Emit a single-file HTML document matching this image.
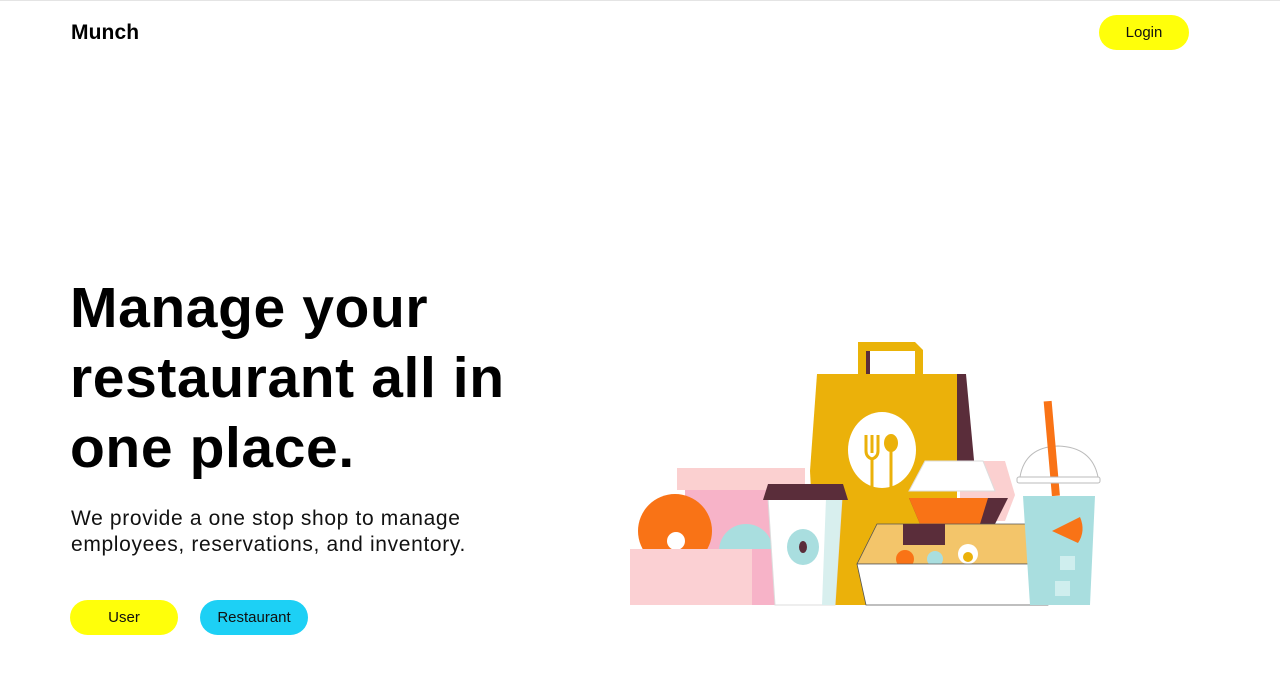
<!DOCTYPE html>
<html><head><meta charset="utf-8"><style>
*{margin:0;padding:0;box-sizing:border-box}
body{width:1280px;height:688px;background:#fff;font-family:"Liberation Sans",sans-serif;color:#000;position:relative;overflow:hidden;border-top:1px solid #e4e4e4}
.logo{position:absolute;left:71px;top:20px;font-size:21px;font-weight:bold;letter-spacing:0.1px}
.btn{position:absolute;border-radius:18px;font-size:15px;display:flex;align-items:center;justify-content:center;color:#111}
h1{position:absolute;left:70px;top:272px;font-size:57px;line-height:70px;font-weight:bold;letter-spacing:0.6px;width:520px}
p{position:absolute;left:71px;top:505px;font-size:21px;line-height:26px;color:#111;letter-spacing:0.65px;white-space:nowrap}
svg{position:absolute;left:0;top:0}
</style></head><body>
<div class="logo">Munch</div>
<div class="btn" style="left:1099px;top:14px;width:90px;height:35px;background:#ffff0a">Login</div>
<h1>Manage your restaurant all in one place.</h1>
<p>We provide a one stop shop to manage<br>employees, reservations, and inventory.</p>
<div class="btn" style="left:70px;top:599px;width:108px;height:35px;background:#ffff0a">User</div>
<div class="btn" style="left:200px;top:599px;width:108px;height:35px;background:#1dd0f5">Restaurant</div>
<svg width="1280" height="688">
<path d="M858 373 V341 H915 L923 349 V373 H915 V350 H866 V373Z" fill="#eab308"/>
<rect x="866" y="350" width="4" height="23" fill="#5a2d3a"/>
<polygon points="953,373 966,373 975,470 955,470" fill="#5a2d3a"/>
<rect x="817" y="373" width="140" height="231" fill="#ebb10a"/>
<polygon points="817,373 810,470 817,604" fill="#ebb10a"/>
<ellipse cx="882" cy="449" rx="34" ry="38" fill="#fff"/>
<g stroke="#ebb10a" stroke-width="3" fill="none"><path d="M866 434 V450 Q866 456 872 458 V488 M872 434 V452 M878 434 V450 Q878 456 872 458"/><path d="M891 450 V488"/></g>
<ellipse cx="891" cy="442" rx="7" ry="9" fill="#ebb10a"/>
<rect x="677" y="467" width="128" height="22" fill="#fbd0d0"/>
<rect x="685" y="489" width="120" height="62" fill="#f7b3c8"/>
<circle cx="675" cy="530" r="37" fill="#f97316"/>
<circle cx="676" cy="540" r="9" fill="#fff"/>
<circle cx="746" cy="550" r="27" fill="#a9dedf"/>
<rect x="630" y="548" width="130" height="56" fill="#fbd0d3"/>
<rect x="752" y="548" width="26" height="56" fill="#f7b3c8"/>
<polygon points="768,497 842,497 835,604 775,604" fill="#fff" stroke="#ddd"/>
<polygon points="826,497 842,497 835,604 822,604" fill="#d8efee"/>
<path d="M768 483 H843 L848 499 H763Z" fill="#5a2d3a"/>
<ellipse cx="803" cy="546" rx="16" ry="18" fill="#a9dedf"/>
<ellipse cx="803" cy="546" rx="4" ry="6" fill="#5a2d3a"/>
<path d="M960 460 H1005 L1015 494 L1005 520 H960Z" fill="#fbd0d0"/>
<path d="M925 460 H983 L995 490 H909Z" fill="#fff" stroke="#ddd"/>
<path d="M909 497 H1008 L995 523 H920Z" fill="#5a2d3a"/>
<path d="M909 497 H988 L980 523 H920Z" fill="#f97316"/>
<path d="M877 523 H1040 L1057 563 H857Z" fill="#f3c56a" stroke="#555" stroke-width="0.8"/>
<rect x="903" y="523" width="42" height="21" fill="#5a2d3a"/>
<circle cx="905" cy="558" r="9" fill="#f97316"/><circle cx="935" cy="558" r="8" fill="#a9dedf"/>
<circle cx="968" cy="553" r="10" fill="#fff"/><circle cx="968" cy="556" r="5" fill="#ebb10a"/>
<circle cx="1038" cy="555" r="9" fill="#fff"/><circle cx="1038" cy="558" r="4" fill="#ebb10a"/>
<path d="M857 563 H1057 L1048 604 H866Z" fill="#fff" stroke="#555" stroke-width="0.8"/>
<path d="M1020 476 Q1025 446 1058 445 Q1092 446 1098 476Z" fill="#fff" stroke="#bbb"/>
<rect x="1048" y="400" width="8" height="95" fill="#f97316" transform="rotate(-5 1052 450)"/>
<rect x="1017" y="476" width="83" height="6" rx="2" fill="#fff" stroke="#bbb"/>
<polygon points="1023,495 1095,495 1090,604 1030,604" fill="#a9dedf"/>
<path d="M1052 530 L1080 516 Q1086 530 1078 542Z" fill="#f97316"/>
<rect x="1060" y="555" width="15" height="14" fill="#cfeeee"/><rect x="1055" y="580" width="15" height="15" fill="#cfeeee"/>
</svg>
</body></html>
